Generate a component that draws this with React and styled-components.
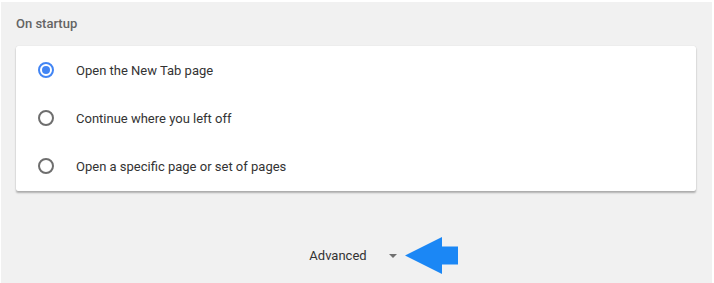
import React, { useState } from 'react'
import styled, { createGlobalStyle } from 'styled-components'

const GlobalStyle = createGlobalStyle`
html, body {
  margin: 0;
  padding: 0;
  background: #fff;
}
body {
  font-family: Roboto, "Liberation Sans", sans-serif;
  -webkit-font-smoothing: antialiased;
}
`

const options = [
  'Open the New Tab page',
  'Continue where you left off',
  'Open a specific page or set of pages',
]

const App = () => {
  const [selected, setSelected] = useState(0)

  return (
    <>
      <GlobalStyle />
      <Page>
        <Heading>On startup</Heading>
        <Card>
          {options.map((label, i) => (
            <Row key={label} onClick={() => setSelected(i)}>
              <Radio checked={selected === i} />
              <Label>{label}</Label>
            </Row>
          ))}
        </Card>
        <AdvancedBar>
          <AdvancedToggle>
            Advanced
            <Caret />
            <Pointer viewBox="0 0 53 37">
              <path d="M0 18.5 L37 0 L37 9.5 L53 9.5 L53 27.5 L37 27.5 L37 37 Z" fill="#1b87f5" />
            </Pointer>
          </AdvancedToggle>
        </AdvancedBar>
      </Page>
    </>
  )
}

export default App

const Page = styled.div`
height: 283px;
box-sizing: border-box;
background: #f1f1f1;
border-top: 2px solid #fff;
border-left: 1px solid #fff;
border-right: 2px solid #fff;
padding: 14px 16px 0 15px;
`
const Heading = styled.div`
font-size: 13px;
line-height: 16px;
font-weight: 500;
color: #646464;
margin: 0 0 14px 0;
`
const Card = styled.div`
background: #fff;
border-radius: 2px;
box-shadow: 0 2px 2px rgba(0, 0, 0, 0.28), 0 0 1px rgba(0, 0, 0, 0.18);
padding-bottom: 1px;
`
const Row = styled.label`
display: flex;
align-items: center;
height: 48px;
padding-left: 22px;
cursor: pointer;
`
const Radio = styled.span`
box-sizing: border-box;
width: 16px;
height: 16px;
border-radius: 50%;
border: 2px solid ${p => (p.checked ? '#4285f4' : '#6e6e6e')};
display: flex;
align-items: center;
justify-content: center;
margin-right: 22px;
flex-shrink: 0;
&::after {
  content: '';
  width: 8px;
  height: 8px;
  border-radius: 50%;
  background: #4285f4;
  display: ${p => (p.checked ? 'block' : 'none')};
}
`
const Label = styled.span`
font-size: 13px;
color: #333;
`
const AdvancedBar = styled.div`
display: flex;
justify-content: center;
margin-top: 44px;
height: 40px;
padding-right: 6px;
`
const AdvancedToggle = styled.div`
position: relative;
display: flex;
align-items: center;
font-size: 13px;
color: #333;
cursor: pointer;
`
const Caret = styled.span`
width: 0;
height: 0;
border-left: 4px solid transparent;
border-right: 4px solid transparent;
border-top: 4px solid #707070;
margin-left: 22px;
margin-top: 1px;
`
const Pointer = styled.svg`
position: absolute;
left: 96px;
top: 2px;
width: 53px;
height: 37px;
`
